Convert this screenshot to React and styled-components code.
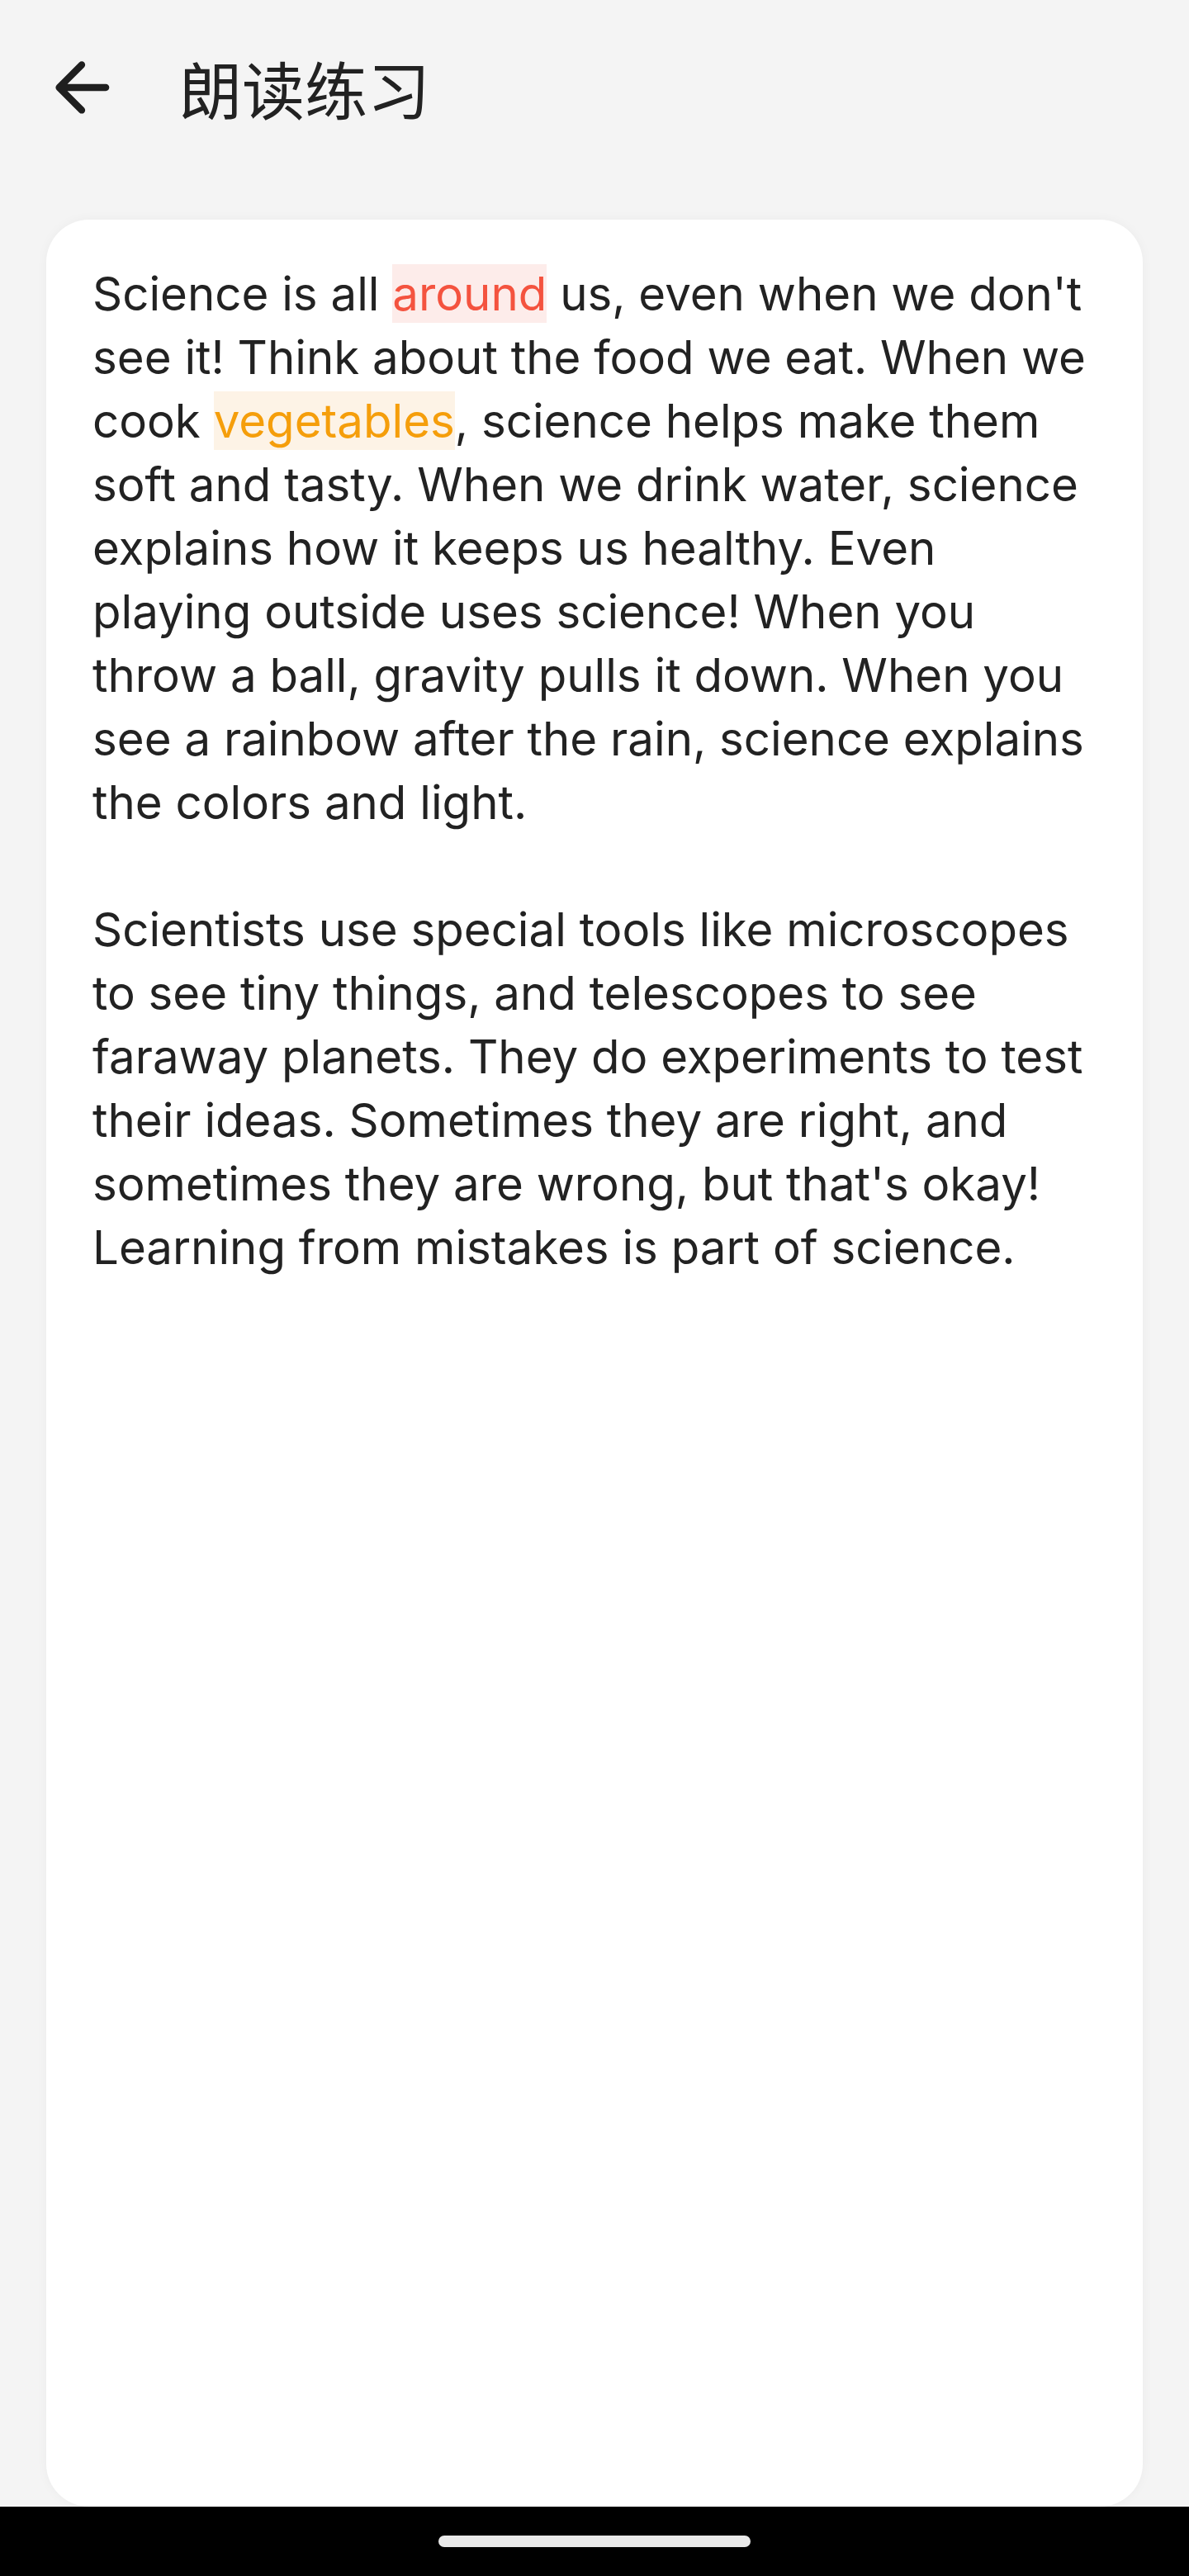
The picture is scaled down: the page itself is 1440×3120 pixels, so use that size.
import React from 'react'
import styled, { createGlobalStyle } from 'styled-components'

const GlobalStyle = createGlobalStyle`
  html, body {
    margin: 0;
    padding: 0;
    background: #f4f4f4;
  }
  * {
    box-sizing: border-box;
  }
`

const Screen = styled.div`
  display: flex;
  flex-direction: column;
  width: 1440px;
  height: 3120px;
  background: #f4f4f4;
  font-family: Inter, "Noto Sans", "Noto Sans CJK SC", sans-serif;
  color: #212121;
  overflow: hidden;
`

const Header = styled.header`
  display: flex;
  align-items: center;
  height: 212px;
  padding-left: 49px;
  gap: 68px;
  flex-shrink: 0;
`

const BackButton = styled.button`
  display: flex;
  align-items: center;
  justify-content: center;
  width: 100px;
  height: 100px;
  padding: 0;
  border: none;
  background: transparent;
  color: #1f1f1f;
  cursor: pointer;
`

const Title = styled.h1`
  margin: 0;
  font-family: "Noto Sans CJK SC", "Noto Sans", sans-serif;
  font-size: 76px;
  font-weight: 400;
  line-height: 1;
  color: #222;
`

const Card = styled.main`
  flex: 1;
  margin: 54px 56px 0;
  padding: 51px 54px 51px 56px;
  background: #fff;
  border-radius: 52px;
  box-shadow: 0 0 14px rgba(0, 0, 0, 0.04);
`

const Paragraph = styled.p`
  margin: 0 0 77px;
  font-size: 56.4px;
  line-height: 77px;
  font-weight: 400;
  color: #222;
`

const Mark = styled.span`
  color: ${p => (p.tone === 'error' ? '#f4533f' : '#f59e0b')};
  background: ${p => (p.tone === 'error' ? '#fdecea' : '#fdf3e6')};
  padding: 1px 0;
`

const NavBar = styled.div`
  display: flex;
  align-items: center;
  justify-content: center;
  height: 84px;
  flex-shrink: 0;
  background: #000;
`

const HomeIndicator = styled.div`
  width: 378px;
  height: 14px;
  border-radius: 7px;
  background: #e9e9e9;
`

const ArrowBack = () => (
  <svg width="100" height="100" viewBox="0 0 24 24" fill="currentColor">
    <path d="M19 11H7.83l4.88-4.88c.39-.39.39-1.03 0-1.420-.39-.39-1.02-.39-1.41 0l-6.59 6.59c-.39.39-.39 1.02 0 1.41l6.59 6.59c.39.39 1.02.39 1.41 0 .39-.39.39-1.02 0-1.41L7.83 13H19c.55 0 1-.45 1-1s-.45-1-1-1z" />
  </svg>
)

export default function App() {
  return (
    <>
      <GlobalStyle />
      <Screen>
        <Header>
          <BackButton aria-label="back">
            <ArrowBack />
          </BackButton>
          <Title>朗读练习</Title>
        </Header>
        <Card>
          <Paragraph>
            Science is all <Mark tone="error">around</Mark> us, even when we don't see it! Think about the
            food we eat. When we cook <Mark tone="warn">vegetables</Mark>, science helps make them soft and
            tasty. When we drink water, science explains how it keeps us healthy. Even playing outside uses
            science! When you throw a ball, gravity pulls it down. When you see a rainbow after the rain,
            science explains the colors and light.
          </Paragraph>
          <Paragraph>
            Scientists use special tools like microscopes to see tiny things, and telescopes to see faraway
            planets. They do experiments to test their ideas. Sometimes they are right, and sometimes they
            are wrong, but that's okay! Learning from mistakes is part of science.
          </Paragraph>
        </Card>
        <NavBar>
          <HomeIndicator />
        </NavBar>
      </Screen>
    </>
  )
}
